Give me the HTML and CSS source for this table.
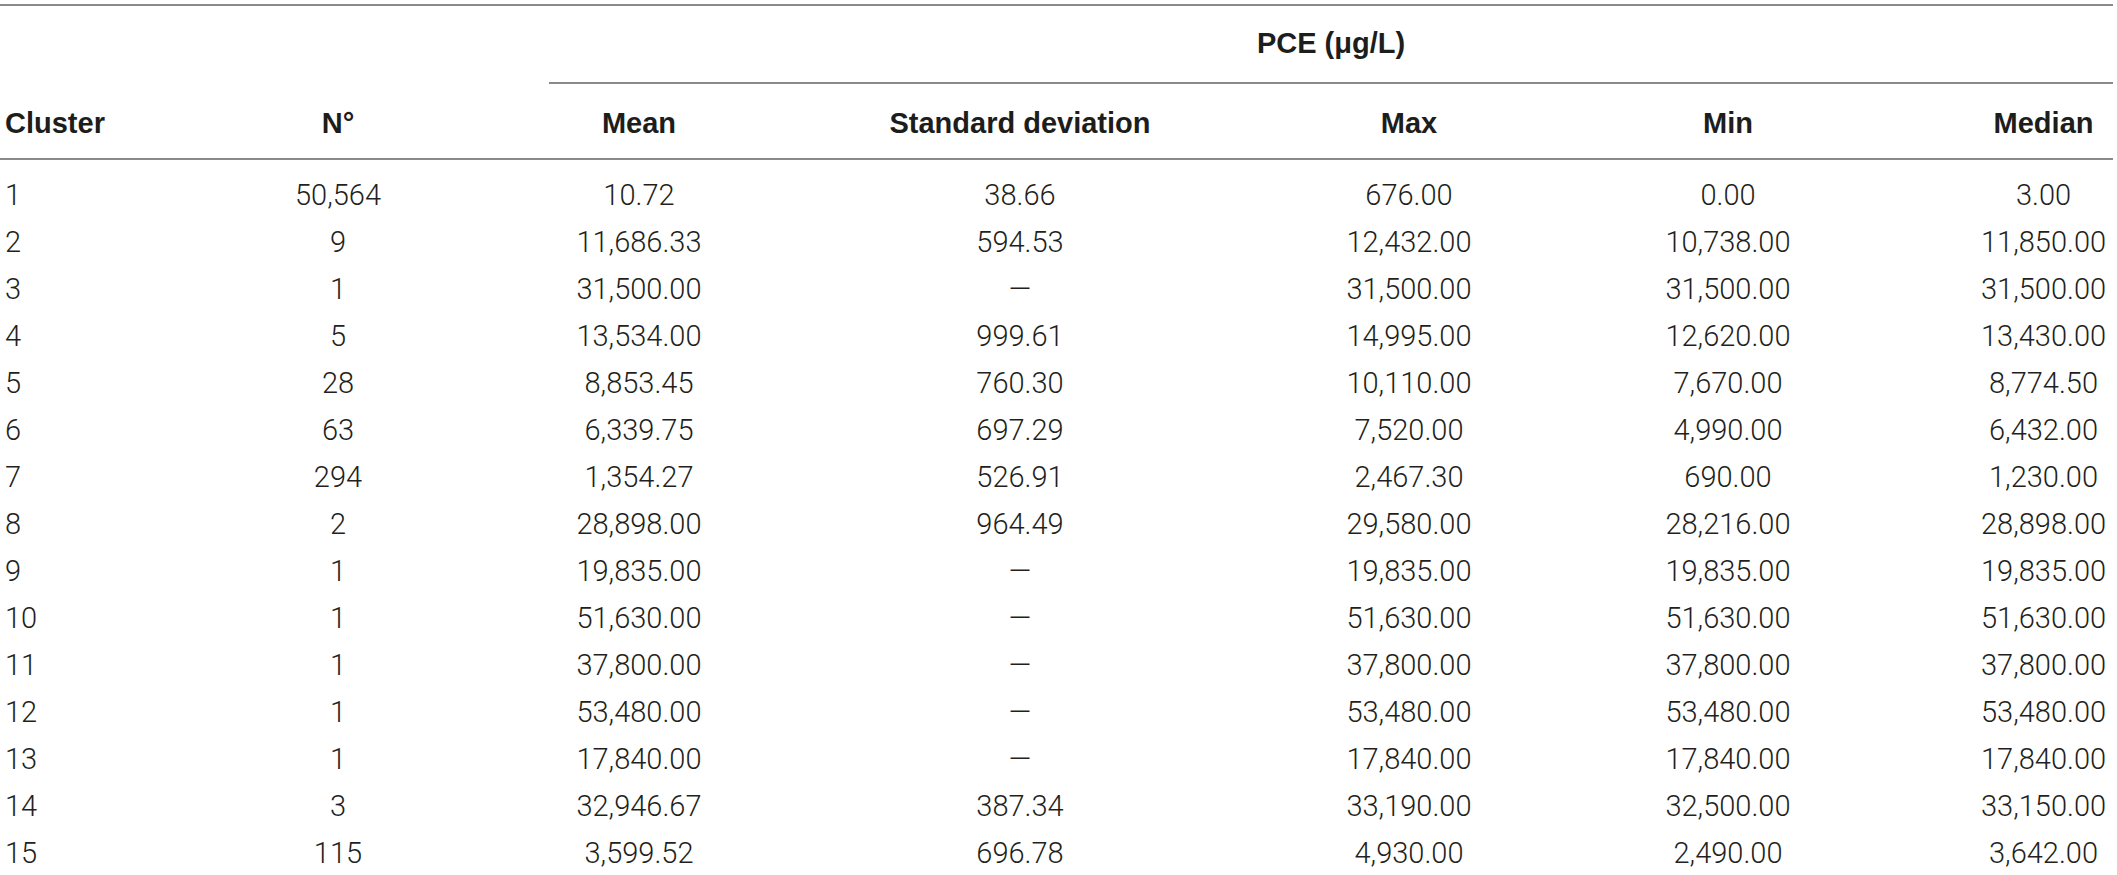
FILE: index.html
```html
<!DOCTYPE html>
<html lang="en">
<head>
    <meta charset="UTF-8">
    <title>PCE clusters</title>
    <link rel="stylesheet" href="styles.css">
</head>
<body>
    <table class="stats">
        <colgroup>
            <col class="c-cluster">
            <col class="c-n">
            <col class="c-mean">
            <col class="c-sd">
            <col class="c-max">
            <col class="c-min">
            <col class="c-median">
        </colgroup>
        <thead>
            <tr class="group-row">
                <th></th>
                <th></th>
                <th colspan="5" class="group"><div class="group-label">PCE (&mu;g/L)</div></th>
            </tr>
            <tr class="head-row">
                <th class="left">Cluster</th>
                <th>N&deg;</th>
                <th>Mean</th>
                <th>Standard deviation</th>
                <th>Max</th>
                <th>Min</th>
                <th class="last">Median</th>
            </tr>
        </thead>
        <tbody>
            <tr><td class="left">1</td><td>50,564</td><td>10.72</td><td>38.66</td><td>676.00</td><td>0.00</td><td class="last">3.00</td></tr>
            <tr><td class="left">2</td><td>9</td><td>11,686.33</td><td>594.53</td><td>12,432.00</td><td>10,738.00</td><td class="last">11,850.00</td></tr>
            <tr><td class="left">3</td><td>1</td><td>31,500.00</td><td>&mdash;</td><td>31,500.00</td><td>31,500.00</td><td class="last">31,500.00</td></tr>
            <tr><td class="left">4</td><td>5</td><td>13,534.00</td><td>999.61</td><td>14,995.00</td><td>12,620.00</td><td class="last">13,430.00</td></tr>
            <tr><td class="left">5</td><td>28</td><td>8,853.45</td><td>760.30</td><td>10,110.00</td><td>7,670.00</td><td class="last">8,774.50</td></tr>
            <tr><td class="left">6</td><td>63</td><td>6,339.75</td><td>697.29</td><td>7,520.00</td><td>4,990.00</td><td class="last">6,432.00</td></tr>
            <tr><td class="left">7</td><td>294</td><td>1,354.27</td><td>526.91</td><td>2,467.30</td><td>690.00</td><td class="last">1,230.00</td></tr>
            <tr><td class="left">8</td><td>2</td><td>28,898.00</td><td>964.49</td><td>29,580.00</td><td>28,216.00</td><td class="last">28,898.00</td></tr>
            <tr><td class="left">9</td><td>1</td><td>19,835.00</td><td>&mdash;</td><td>19,835.00</td><td>19,835.00</td><td class="last">19,835.00</td></tr>
            <tr><td class="left">10</td><td>1</td><td>51,630.00</td><td>&mdash;</td><td>51,630.00</td><td>51,630.00</td><td class="last">51,630.00</td></tr>
            <tr><td class="left">11</td><td>1</td><td>37,800.00</td><td>&mdash;</td><td>37,800.00</td><td>37,800.00</td><td class="last">37,800.00</td></tr>
            <tr><td class="left">12</td><td>1</td><td>53,480.00</td><td>&mdash;</td><td>53,480.00</td><td>53,480.00</td><td class="last">53,480.00</td></tr>
            <tr><td class="left">13</td><td>1</td><td>17,840.00</td><td>&mdash;</td><td>17,840.00</td><td>17,840.00</td><td class="last">17,840.00</td></tr>
            <tr><td class="left">14</td><td>3</td><td>32,946.67</td><td>387.34</td><td>33,190.00</td><td>32,500.00</td><td class="last">33,150.00</td></tr>
            <tr><td class="left">15</td><td>115</td><td>3,599.52</td><td>696.78</td><td>4,930.00</td><td>2,490.00</td><td class="last">3,642.00</td></tr>
        </tbody>
    </table>
</body>
</html>
```

FILE: styles.css
```css
* {
    box-sizing: border-box;
    margin: 0;
    padding: 0;
}

body {
    background-color: #ffffff;
    color: #231f20;
    padding-top: 4px;
}

.stats {
    width: 2113px;
    table-layout: fixed;
    border-collapse: collapse;
    border-top: 2px solid #8a8a8a;
    font-family: Roboto, "Liberation Sans", sans-serif;
    font-weight: 300;
    font-size: 29px;
}

.c-cluster { width: 140px; }
.c-n { width: 396px; }
.c-mean { width: 206px; }
.c-sd { width: 556px; }
.c-max { width: 222px; }
.c-min { width: 416px; }
.c-median { width: 177px; }

th {
    font-family: "Liberation Sans", Arial, sans-serif;
    font-weight: bold;
    font-size: 29px;
    line-height: 32px;
    color: #1d1d1b;
    text-align: center;
    padding: 0;
}

.group {
    padding-left: 13px;
}

.group-label {
    padding: 21px 0 23px;
    border-bottom: 2px solid #8a8a8a;
    text-align: center;
}

.head-row th {
    padding: 23px 0 19px;
    border-bottom: 2px solid #8a8a8a;
}

td {
    text-align: center;
    line-height: 47px;
    padding: 0;
    white-space: nowrap;
}

tbody tr:first-child td {
    padding-top: 12px;
}

.left {
    text-align: left;
    padding-left: 5px;
}

th.left {
    padding-left: 5px;
}

.last {
    padding-left: 38px;
}

th.last {
    padding-left: 38px;
}
```
